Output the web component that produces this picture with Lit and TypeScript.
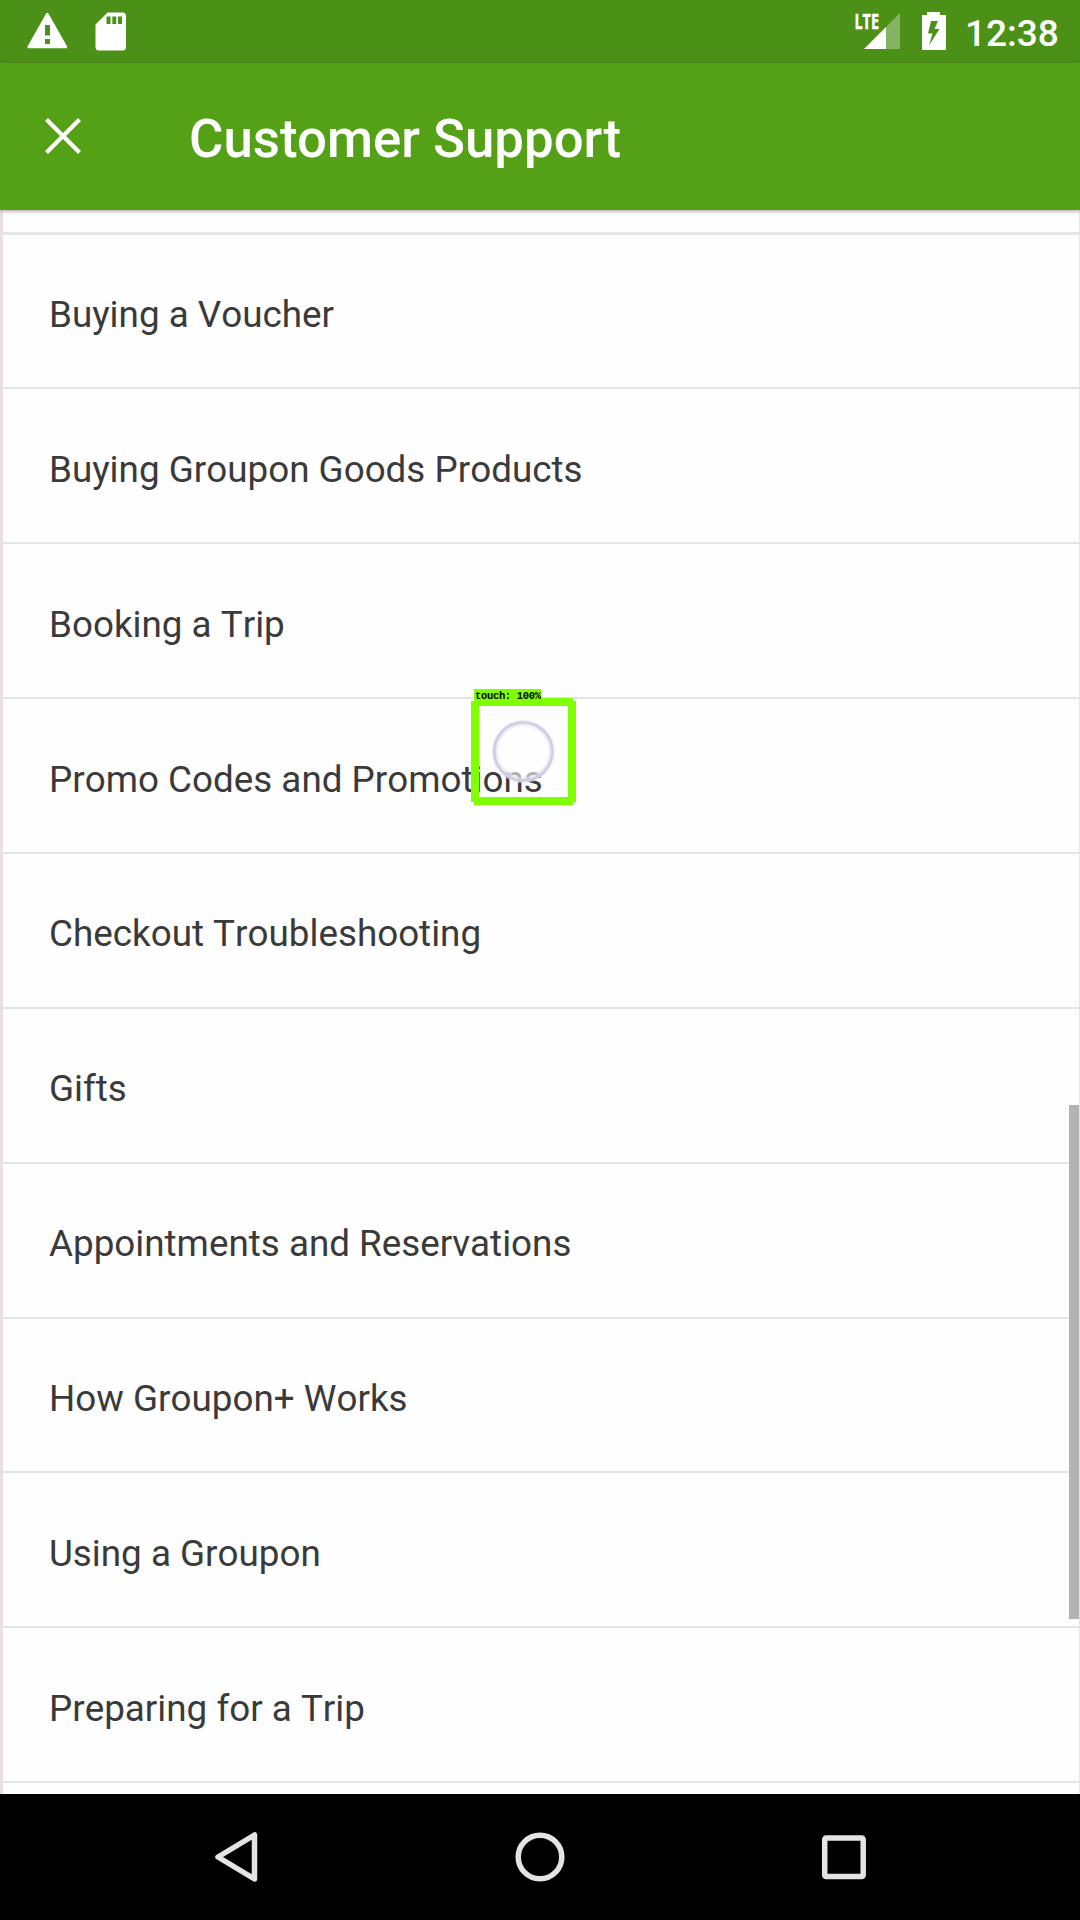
import { LitElement, html, css } from "lit";
import { customElement } from "lit/decorators.js";

const TOPICS = [
  "Buying a Voucher",
  "Buying Groupon Goods Products",
  "Booking a Trip",
  "Promo Codes and Promotions",
  "Checkout Troubleshooting",
  "Gifts",
  "Appointments and Reservations",
  "How Groupon+ Works",
  "Using a Groupon",
  "Preparing for a Trip",
];

@customElement("status-bar")
class StatusBar extends LitElement {
  static styles = css`
    :host { display: flex; height: 63px; background: #4b9118; color: #fff; align-items: stretch; justify-content: space-between; }
    .group { display: flex; }
    svg { display: block; height: 63px; }
    .clock { font: 500 37px/63px Roboto, sans-serif; width: 115px; padding-top: 2px; box-sizing: border-box; height: 63px; white-space: nowrap; }
    .net { font: 700 21.5px "Open Sans", sans-serif; stroke: #fff; stroke-width: 0.5px; }
  `;
  render() {
    return html`
      <div class="group">
        <svg width="140" height="63" viewBox="0 0 140 63" fill="#fff">
          <path d="M47.3 12.7q.8 0 1.3 1L67 46.3q.6 2-.8 2H28.4q-1.5-.2-.8-2L46 13.7q.5-1 1.3-1zM45 25v10.6h5V25zm0 14v5h5v-5z" fill-rule="evenodd"/>
          <path d="M107.5 12.5H122.5q3.5 0 3.500 3.5V47q0 3.5-3.5 3.5H99q-3.5 0-3.5-3.5V24.5zM106.5 16.5V24h4v-7.5zm5.8 0V24h4v-7.5zm5.7 0V24h4v-7.5z" fill-rule="evenodd"/>
        </svg>
      </div>
      <div class="group">
        <svg width="117" height="63" viewBox="848 0 117 63" fill="#fff">
          <text class="net" x="854.5" y="29" textLength="24.5" lengthAdjust="spacingAndGlyphs">LTE</text>
          <path d="M886 27L900 13V49H886z" opacity=".32"/>
          <path d="M864 49L886 27V49z"/>
          <path d="M927 12h13v3h6V50H922V15h5zM931 21L928 33.5H932.5L929 45.5L939.5 29H934.5L938 21z" fill-rule="evenodd"/>
        </svg>
        <div class="clock">12:38</div>
      </div>`;
  }
}

@customElement("app-toolbar")
class AppToolbar extends LitElement {
  static styles = css`
    :host { display: flex; height: 147px; background: #54a118; color: #fff; align-items: center; box-shadow: 0 1px 4px rgba(60, 30, 40, 0.45); position: relative; z-index: 1; }
    .close { display: block; width: 36px; height: 36px; margin: 0 0 1px 45px; }
    .title { margin: 0 0 0 108px; font: 500 52.8px/60px Roboto, sans-serif; white-space: nowrap; padding-top: 5px; }
  `;
  render() {
    return html`
      <svg class="close" viewBox="0 0 36 36" stroke="#fff" stroke-width="4.2"><path d="M1.5 1.5L34.5 34.5M34.5 1.5L1.5 34.5"/></svg>
      <h1 class="title">Customer Support</h1>`;
  }
}

@customElement("topic-list")
class TopicList extends LitElement {
  static styles = css`
    :host { display: block; flex: 1; min-height: 0; overflow: hidden; position: relative; background: #fefefe; border-left: 3px solid #e9e1e4; border-right: 1px solid #e6e6e6; box-sizing: border-box; }
    .previous { height: 24.6px; border-bottom: 3px solid #e6e6e6; box-sizing: border-box; }
    .row { height: 154.85px; box-sizing: border-box; border-bottom: 2px solid #e4e4e4; padding: 8px 0 0 46px; display: flex; align-items: center; font: 400 36.8px/42px Roboto, sans-serif; font-kerning: none; color: #3a3a3a; white-space: nowrap; }
    .thumb { position: absolute; right: -1px; top: 895px; width: 11px; height: 514px; background: #b3b3b3; }
  `;
  render() {
    return html`
      <div class="previous"></div>
      ${TOPICS.map((t) => html`<div class="row">${t}</div>`)}
      <div class="thumb"></div>`;
  }
}

@customElement("nav-bar")
class NavBar extends LitElement {
  static styles = css`
    :host { display: flex; height: 126px; background: #000; align-items: center; justify-content: space-between; padding: 0 214px; box-sizing: border-box; }
    svg { display: block; width: 52px; height: 52px; }
  `;
  render() {
    return html`
      <svg viewBox="0 0 52 52" fill="none" stroke="#e4e4e4" stroke-width="5.5" stroke-linejoin="round"><path d="M4 26L40.5 4V48z"/></svg>
      <svg viewBox="0 0 52 52" fill="none" stroke="#e4e4e4" stroke-width="5.5"><circle cx="26" cy="26" r="21.8"/></svg>
      <svg viewBox="0 0 52 52" fill="none" stroke="#e4e4e4" stroke-width="5.5"><rect x="10.7" y="7" width="38.5" height="38.5" rx="1.5"/></svg>`;
  }
}

@customElement("touch-marker")
class TouchMarker extends LitElement {
  static styles = css`
    :host { position: absolute; left: 471px; top: 689px; width: 105px; height: 116px; z-index: 3; }
    svg { display: block; }
    .label { font: 700 10.5px "Liberation Mono", monospace; }
  `;
  render() {
    return html`
      <svg width="105" height="116" viewBox="471 689 105 116">
        <circle cx="523.3" cy="751.5" r="28.5" fill="#fefefe" fill-opacity=".6" stroke="#e2e0f0" stroke-width="6" stroke-opacity=".6"/>
        <circle cx="523.3" cy="751.5" r="29" fill="none" stroke="#cfcde3" stroke-width="2.5"/>
        <path d="M474 698H573V701H576V802H573V805H474V802H471V701H474zM479 706V797H568V706z" fill="#80ff00" fill-rule="evenodd"/>
        <rect x="474" y="689" width="67" height="12" fill="#80ff00"/>
        <text class="label" x="475" y="699" textLength="66">touch: 100%</text>
      </svg>`;
  }
}

@customElement("app-root")
class AppRoot extends LitElement {
  static styles = css`
    :host { display: flex; flex-direction: column; position: relative; width: 1080px; height: 1920px; overflow: hidden; background: #fefefe; }
  `;
  render() {
    return html`
      <status-bar></status-bar>
      <app-toolbar></app-toolbar>
      <topic-list></topic-list>
      <nav-bar></nav-bar>
      <touch-marker></touch-marker>`;
  }
}
